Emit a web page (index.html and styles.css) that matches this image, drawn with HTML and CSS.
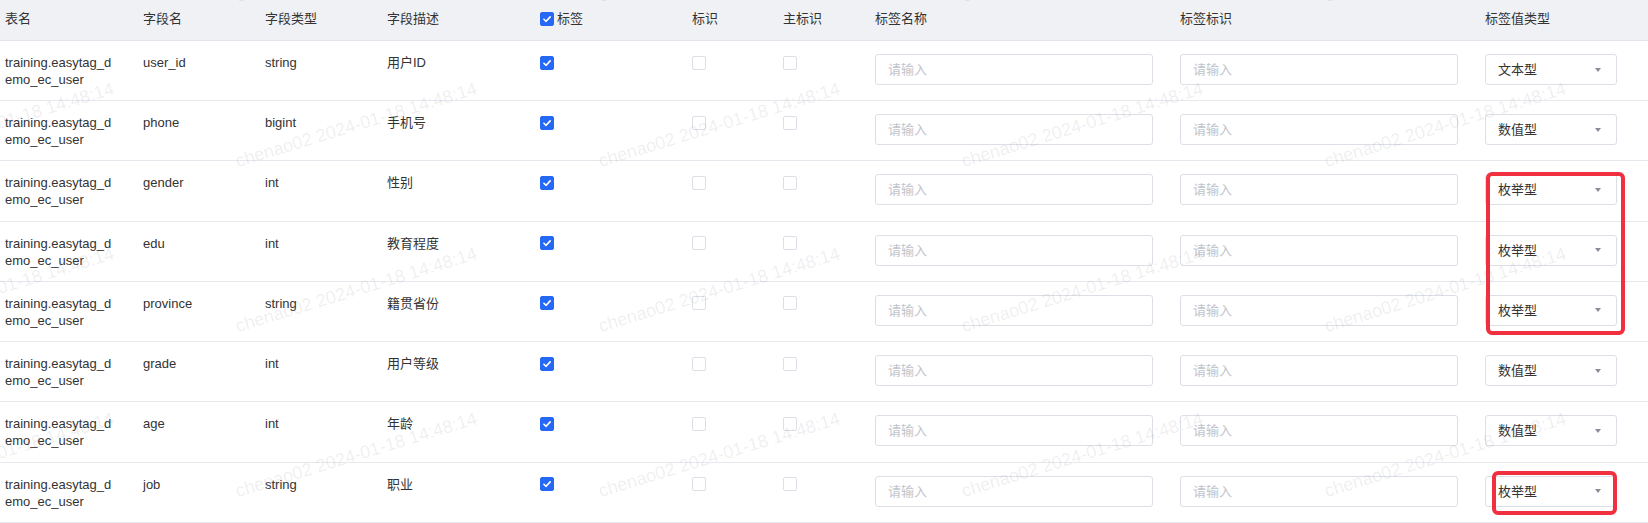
FILE: index.html
```html
<!DOCTYPE html>
<html lang="zh-CN">
<head>
<meta charset="utf-8">
<title>字段配置</title>
<link rel="stylesheet" href="styles.css">
</head>
<body>
<div class="table">
  <div class="row head">
    <div class="cell">表名</div>
    <div class="cell">字段名</div>
    <div class="cell">字段类型</div>
    <div class="cell">字段描述</div>
    <div class="cell check-head"><span class="cb on"><svg viewBox="0 0 14 14"><path d="M3.4 7.3 L6 9.7 L10.7 4.5"/></svg></span><span>标签</span></div>
    <div class="cell">标识</div>
    <div class="cell">主标识</div>
    <div class="cell">标签名称</div>
    <div class="cell">标签标识</div>
    <div class="cell">标签值类型</div>
  </div>

  <div class="row body-row">
    <div class="cell name">training.easytag_demo_ec_user</div>
    <div class="cell">user_id</div>
    <div class="cell">string</div>
    <div class="cell">用户ID</div>
    <div class="cell"><span class="cb on"><svg viewBox="0 0 14 14"><path d="M3.4 7.3 L6 9.7 L10.7 4.5"/></svg></span></div>
    <div class="cell"><span class="cb"></span></div>
    <div class="cell"><span class="cb"></span></div>
    <div class="cell"><input class="input" placeholder="请输入"></div>
    <div class="cell"><input class="input" placeholder="请输入"></div>
    <div class="cell"><div class="select"><span>文本型</span><i class="caret"></i></div></div>
  </div>

  <div class="row body-row">
    <div class="cell name">training.easytag_demo_ec_user</div>
    <div class="cell">phone</div>
    <div class="cell">bigint</div>
    <div class="cell">手机号</div>
    <div class="cell"><span class="cb on"><svg viewBox="0 0 14 14"><path d="M3.4 7.3 L6 9.7 L10.7 4.5"/></svg></span></div>
    <div class="cell"><span class="cb"></span></div>
    <div class="cell"><span class="cb"></span></div>
    <div class="cell"><input class="input" placeholder="请输入"></div>
    <div class="cell"><input class="input" placeholder="请输入"></div>
    <div class="cell"><div class="select"><span>数值型</span><i class="caret"></i></div></div>
  </div>

  <div class="row body-row">
    <div class="cell name">training.easytag_demo_ec_user</div>
    <div class="cell">gender</div>
    <div class="cell">int</div>
    <div class="cell">性别</div>
    <div class="cell"><span class="cb on"><svg viewBox="0 0 14 14"><path d="M3.4 7.3 L6 9.7 L10.7 4.5"/></svg></span></div>
    <div class="cell"><span class="cb"></span></div>
    <div class="cell"><span class="cb"></span></div>
    <div class="cell"><input class="input" placeholder="请输入"></div>
    <div class="cell"><input class="input" placeholder="请输入"></div>
    <div class="cell"><div class="select"><span>枚举型</span><i class="caret"></i></div></div>
  </div>

  <div class="row body-row">
    <div class="cell name">training.easytag_demo_ec_user</div>
    <div class="cell">edu</div>
    <div class="cell">int</div>
    <div class="cell">教育程度</div>
    <div class="cell"><span class="cb on"><svg viewBox="0 0 14 14"><path d="M3.4 7.3 L6 9.7 L10.7 4.5"/></svg></span></div>
    <div class="cell"><span class="cb"></span></div>
    <div class="cell"><span class="cb"></span></div>
    <div class="cell"><input class="input" placeholder="请输入"></div>
    <div class="cell"><input class="input" placeholder="请输入"></div>
    <div class="cell"><div class="select"><span>枚举型</span><i class="caret"></i></div></div>
  </div>

  <div class="row body-row">
    <div class="cell name">training.easytag_demo_ec_user</div>
    <div class="cell">province</div>
    <div class="cell">string</div>
    <div class="cell">籍贯省份</div>
    <div class="cell"><span class="cb on"><svg viewBox="0 0 14 14"><path d="M3.4 7.3 L6 9.7 L10.7 4.5"/></svg></span></div>
    <div class="cell"><span class="cb"></span></div>
    <div class="cell"><span class="cb"></span></div>
    <div class="cell"><input class="input" placeholder="请输入"></div>
    <div class="cell"><input class="input" placeholder="请输入"></div>
    <div class="cell"><div class="select"><span>枚举型</span><i class="caret"></i></div></div>
  </div>

  <div class="row body-row">
    <div class="cell name">training.easytag_demo_ec_user</div>
    <div class="cell">grade</div>
    <div class="cell">int</div>
    <div class="cell">用户等级</div>
    <div class="cell"><span class="cb on"><svg viewBox="0 0 14 14"><path d="M3.4 7.3 L6 9.7 L10.7 4.5"/></svg></span></div>
    <div class="cell"><span class="cb"></span></div>
    <div class="cell"><span class="cb"></span></div>
    <div class="cell"><input class="input" placeholder="请输入"></div>
    <div class="cell"><input class="input" placeholder="请输入"></div>
    <div class="cell"><div class="select"><span>数值型</span><i class="caret"></i></div></div>
  </div>

  <div class="row body-row">
    <div class="cell name">training.easytag_demo_ec_user</div>
    <div class="cell">age</div>
    <div class="cell">int</div>
    <div class="cell">年龄</div>
    <div class="cell"><span class="cb on"><svg viewBox="0 0 14 14"><path d="M3.4 7.3 L6 9.7 L10.7 4.5"/></svg></span></div>
    <div class="cell"><span class="cb"></span></div>
    <div class="cell"><span class="cb"></span></div>
    <div class="cell"><input class="input" placeholder="请输入"></div>
    <div class="cell"><input class="input" placeholder="请输入"></div>
    <div class="cell"><div class="select"><span>数值型</span><i class="caret"></i></div></div>
  </div>

  <div class="row body-row">
    <div class="cell name">training.easytag_demo_ec_user</div>
    <div class="cell">job</div>
    <div class="cell">string</div>
    <div class="cell">职业</div>
    <div class="cell"><span class="cb on"><svg viewBox="0 0 14 14"><path d="M3.4 7.3 L6 9.7 L10.7 4.5"/></svg></span></div>
    <div class="cell"><span class="cb"></span></div>
    <div class="cell"><span class="cb"></span></div>
    <div class="cell"><input class="input" placeholder="请输入"></div>
    <div class="cell"><input class="input" placeholder="请输入"></div>
    <div class="cell"><div class="select"><span>枚举型</span><i class="caret"></i></div></div>
  </div>

  <div class="mark mark-a"></div>
  <div class="mark mark-b"></div>
</div>

<div class="watermark-clip">
  <div class="watermark">
    <div class="wm"><span>chenao02 2024-01-18 14:48:14</span></div>
    <div class="wm"><span>chenao02 2024-01-18 14:48:14</span></div>
    <div class="wm"><span>chenao02 2024-01-18 14:48:14</span></div>
    <div class="wm"><span>chenao02 2024-01-18 14:48:14</span></div>
    <div class="wm"><span>chenao02 2024-01-18 14:48:14</span></div>
    <div class="wm"><span>chenao02 2024-01-18 14:48:14</span></div>
    <div class="wm"><span>chenao02 2024-01-18 14:48:14</span></div>
    <div class="wm"><span>chenao02 2024-01-18 14:48:14</span></div>
    <div class="wm"><span>chenao02 2024-01-18 14:48:14</span></div>
    <div class="wm"><span>chenao02 2024-01-18 14:48:14</span></div>
    <div class="wm"><span>chenao02 2024-01-18 14:48:14</span></div>
    <div class="wm"><span>chenao02 2024-01-18 14:48:14</span></div>
    <div class="wm"><span>chenao02 2024-01-18 14:48:14</span></div>
    <div class="wm"><span>chenao02 2024-01-18 14:48:14</span></div>
    <div class="wm"><span>chenao02 2024-01-18 14:48:14</span></div>
    <div class="wm"><span>chenao02 2024-01-18 14:48:14</span></div>
    <div class="wm"><span>chenao02 2024-01-18 14:48:14</span></div>
    <div class="wm"><span>chenao02 2024-01-18 14:48:14</span></div>
    <div class="wm"><span>chenao02 2024-01-18 14:48:14</span></div>
    <div class="wm"><span>chenao02 2024-01-18 14:48:14</span></div>
    <div class="wm"><span>chenao02 2024-01-18 14:48:14</span></div>
    <div class="wm"><span>chenao02 2024-01-18 14:48:14</span></div>
    <div class="wm"><span>chenao02 2024-01-18 14:48:14</span></div>
    <div class="wm"><span>chenao02 2024-01-18 14:48:14</span></div>
  </div>
</div>
</body>
</html>
```

FILE: styles.css
```css
* { box-sizing: border-box; }

html, body {
  margin: 0;
  padding: 0;
  overflow: hidden;
  background: #ffffff;
}

body {
  position: relative;
  width: 1648px;
  height: 523px;
  font-family: "Liberation Sans", "Noto Sans CJK SC", sans-serif;
  font-size: 13px;
  line-height: 17px;
  color: #333333;
}

.table {
  position: relative;
  height: 523px;
  overflow: hidden;
}

.row {
  display: grid;
  grid-template-columns: 138px 122px 122px 153px 152px 91px 92px 305px 305px 168px;
}

.head {
  height: 41px;
  background: #f0f1f5;
  border-bottom: 1px solid #e3e5ec;
}

.head .cell {
  padding: 10px 0 0 5px;
}

.body-row {
  height: 60.23px;
  background: #ffffff;
  border-bottom: 1px solid #e6e8ee;
}

.body-row .cell {
  padding: 13px 0 0 5px;
}

.body-row .cell.name {
  padding-right: 25px;
  word-break: break-all;
}

.check-head {
  display: flex;
  align-items: flex-start;
  gap: 3px;
}

.cb {
  display: block;
  width: 14px;
  height: 14px;
  margin-top: 1.5px;
  border: 1px solid #dcdfe6;
  border-radius: 2px;
  background: #ffffff;
}

.cb.on {
  background: #2468f5;
  border-color: #2468f5;
}

.cb svg {
  display: block;
  width: 12px;
  height: 12px;
  fill: none;
  stroke: #ffffff;
  stroke-width: 1.9;
  stroke-linecap: round;
  stroke-linejoin: round;
}

.input {
  display: block;
  width: 278px;
  height: 31px;
  margin: 0;
  padding: 0 12px;
  border: 1px solid #dcdfe6;
  border-radius: 3px;
  background: #ffffff;
  font: inherit;
  color: #333333;
  outline: none;
}

.input::placeholder {
  color: #c0c4cc;
}

.select {
  display: flex;
  align-items: center;
  justify-content: space-between;
  width: 132px;
  height: 31px;
  padding: 0 15px 0 12px;
  border: 1px solid #dcdfe6;
  border-radius: 3px;
  background: #ffffff;
  color: #333333;
}

.caret {
  display: block;
  width: 0;
  height: 0;
  border-left: 3.5px solid transparent;
  border-right: 3.5px solid transparent;
  border-top: 4px solid #8a8e99;
}

/* annotation boxes drawn over the select column */
.mark {
  position: absolute;
  border: 4px solid #f0303f;
  border-radius: 6px;
  pointer-events: none;
}

.mark-a {
  left: 1486px;
  top: 172px;
  width: 139px;
  height: 163px;
}

.mark-b {
  left: 1492px;
  top: 471px;
  width: 125px;
  height: 44px;
}

/* watermark overlay */
.watermark-clip {
  position: absolute;
  left: 0;
  top: 0;
  width: 1648px;
  height: 523px;
  overflow: hidden;
  pointer-events: none;
}

.watermark {
  position: relative;
  left: -124px;
  top: -163px;
  width: 2178px;
  display: flex;
  flex-wrap: wrap;
}

.wm {
  position: relative;
  width: 363px;
  height: 165px;
}

.wm span {
  position: absolute;
  left: 0;
  bottom: -4px;
  white-space: nowrap;
  font-family: "Liberation Sans", sans-serif;
  font-size: 18px;
  line-height: 20px;
  color: rgba(120, 120, 130, 0.12);
  transform-origin: 0 100%;
  transform: rotate(-17deg);
}
```
